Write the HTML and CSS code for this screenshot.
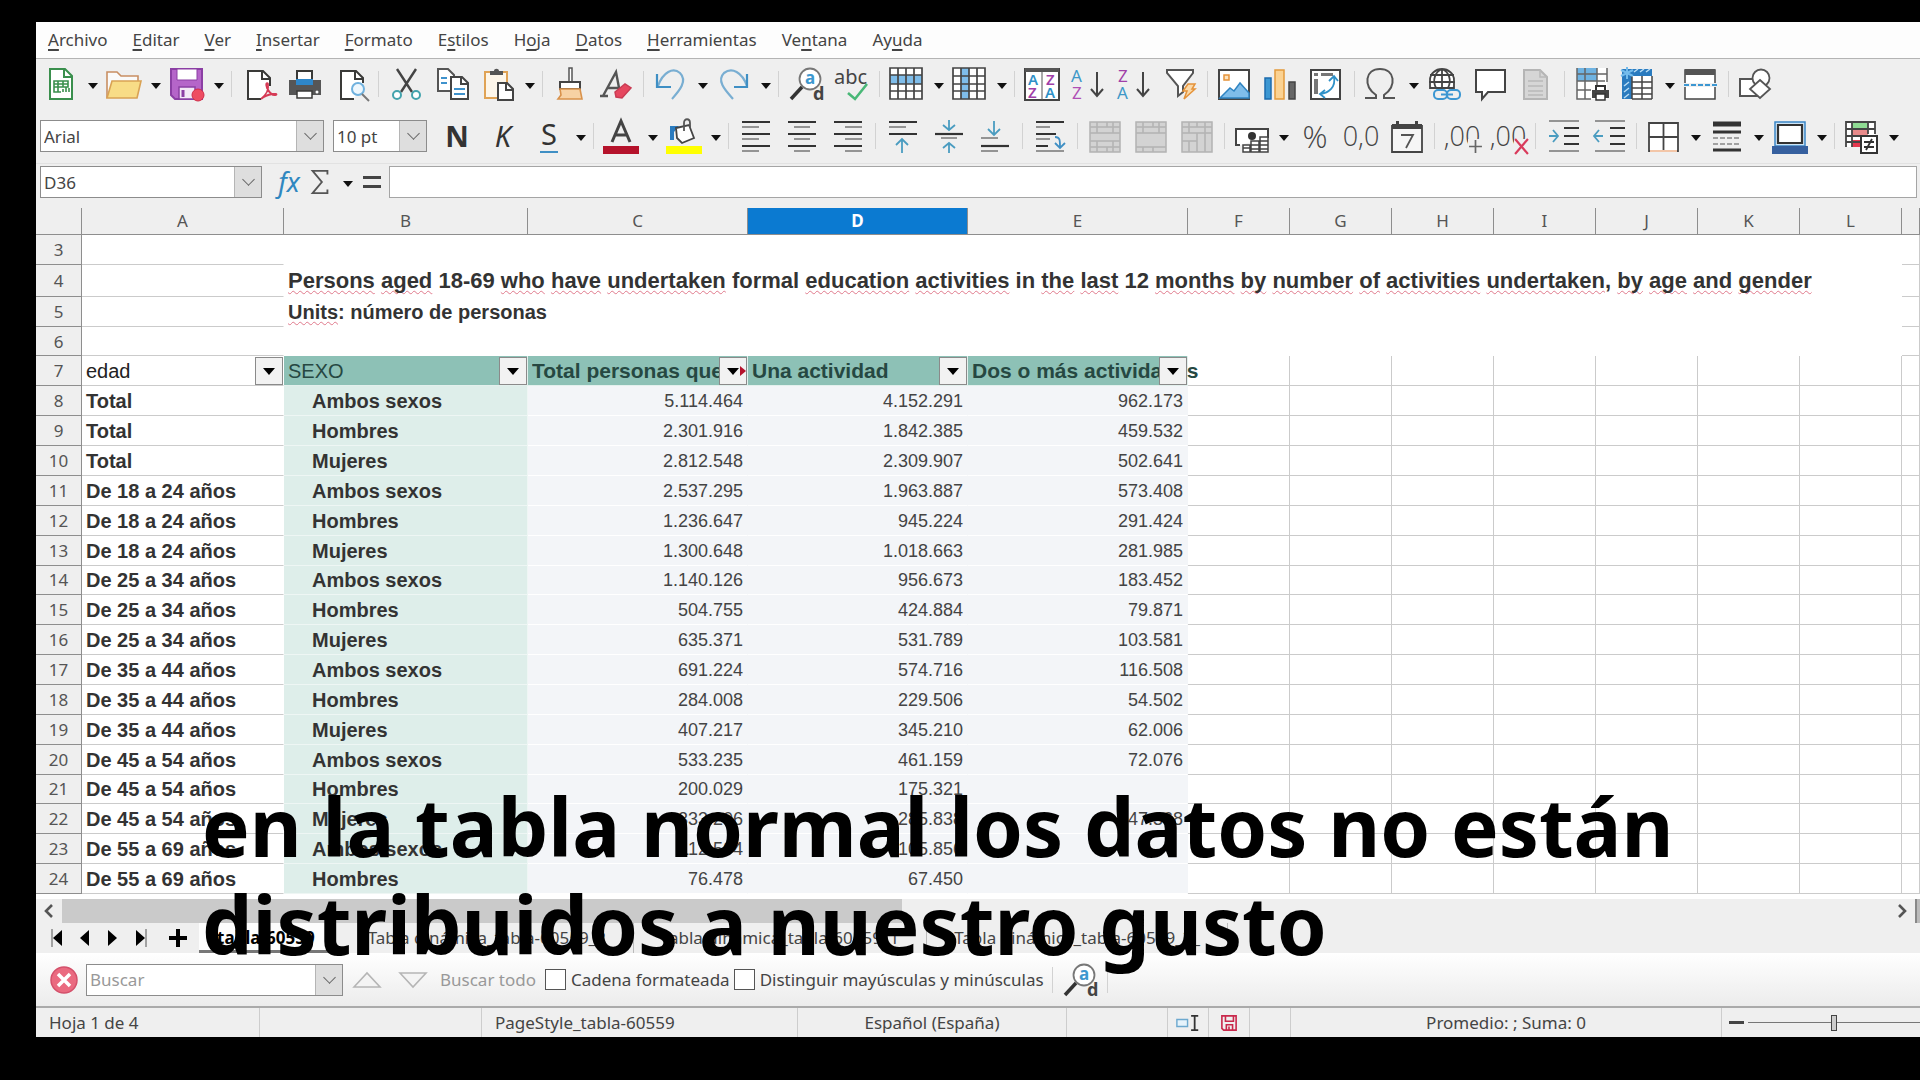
FILE: index.html
```
<!DOCTYPE html>
<html lang="es">

<head>
    <meta charset="utf-8">
    <meta name="viewport" content="width=device-width,initial-scale=1">
    <title>tabla-60559 - Calc</title>
    <link rel="stylesheet" href="styles.css">
</head>

<body>
    <div class="window">
        <nav class="menu">
            <a href="#"><u>A</u>rchivo</a>
            <a href="#"><u>E</u>ditar</a>
            <a href="#"><u>V</u>er</a>
            <a href="#"><u>I</u>nsertar</a>
            <a href="#"><u>F</u>ormato</a>
            <a href="#">E<u>s</u>tilos</a>
            <a href="#">H<u>o</u>ja</a>
            <a href="#"><u>D</u>atos</a>
            <a href="#"><u>H</u>erramientas</a>
            <a href="#">Ve<u>n</u>tana</a>
            <a href="#">Ay<u>u</u>da</a>
        </nav>

        <!-- standard toolbar -->
        <div class="toolbar">
            <button class="tool" aria-label="Nuevo"><svg viewBox="0 0 36 36"><path d="M7 3h15l7 7v23H7z" fill="#fff" stroke="#3a8f4d" stroke-width="2"/><path d="M21 3v8h8" fill="none" stroke="#3a8f4d" stroke-width="2"/><path d="M11 15h14v6H11zM11 18h14M15 15v11M20 15v6M11 21v5h7M20 26v-3M23 26v-5M26 26v-4" fill="none" stroke="#3a8f4d" stroke-width="1.6"/></svg></button>
            <button class="drop" aria-label="Más"></button>
            <button class="tool" aria-label="Abrir"><svg viewBox="0 0 36 36"><path d="M1 32V6h10l4 4h17v6" fill="#fafafa" stroke="#c98f63" stroke-width="1.6"/><path d="M6 15h29l-4 17H1z" fill="#f8dc86" stroke="#d9a254" stroke-width="1.6"/></svg></button>
            <button class="drop" aria-label="Más"></button>
            <button class="tool" aria-label="Guardar"><svg viewBox="0 0 36 36"><path d="M2 3h31v30H6l-4-4z" fill="#b565c9" stroke="#8b3fa4" stroke-width="2"/><path d="M8 3h20v11H8z" fill="#fff" stroke="#8b3fa4"/><path d="M10 21h16v12H10z" fill="#f3e8f6" stroke="#8b3fa4" stroke-width="1.5"/><path d="M14 24v7" stroke="#8b3fa4" stroke-width="3"/><circle cx="29" cy="29" r="6" fill="#ee4c62" stroke="#d02d48"/></svg></button>
            <button class="drop" aria-label="Más"></button>
            <span class="sep"></span>
            <button class="tool" aria-label="Exportar a PDF"><svg viewBox="0 0 36 36"><path d="M20 33H7V5h15l7 7v8" fill="#fff" stroke="#3a3a38" stroke-width="2"/><path d="M21 5v8h8" fill="none" stroke="#3a3a38" stroke-width="2"/><path d="M20 33c5-4 8-10 7-15-1-2-3 0-1 4s5 8 9 7c3-2-8-2-15 4z" fill="none" stroke="#d63a55" stroke-width="1.8"/></svg></button>
            <button class="tool" aria-label="Imprimir"><svg viewBox="0 0 36 36"><path d="M10 14V5h15v9" fill="#fff" stroke="#3a3a38" stroke-width="2"/><path d="M2 14h32v15H2z" fill="#565656"/><path d="M9 13h17v6H9z" fill="#2f87c9"/><path d="M10 25h15v7H10z" fill="#fff" stroke="#3a3a38" stroke-width="1.5"/><circle cx="30" cy="26" r="1.5" fill="#fff"/></svg></button>
            <button class="tool" aria-label="Previsualizar"><svg viewBox="0 0 36 36"><path d="M30 17v-5l-7-7H8v28h13" fill="#fff" stroke="#3a3a38" stroke-width="2"/><path d="M22 5v8h8" fill="none" stroke="#3a3a38" stroke-width="2"/><circle cx="25" cy="23" r="6" fill="#eef7fd" stroke="#6fb1de" stroke-width="2"/><path d="M29 28l7 7" stroke="#777" stroke-width="2"/></svg></button>
            <span class="sep"></span>
            <button class="tool" aria-label="Cortar"><svg viewBox="0 0 36 36"><path d="M9 3l15 23M28 3L13 26" stroke="#444" stroke-width="2.4"/><circle cx="9" cy="29" r="4" fill="#fff" stroke="#43a3ad" stroke-width="2"/><circle cx="28" cy="29" r="4" fill="#fff" stroke="#43a3ad" stroke-width="2"/></svg></button>
            <button class="tool" aria-label="Copiar"><svg viewBox="0 0 36 36"><path d="M4 3h10l6 6v16H4z" fill="#fff" stroke="#555" stroke-width="2"/><path d="M7 12h6M7 17h6" stroke="#3f92cc" stroke-width="2"/><path d="M17 11h11l6 6v16H17z" fill="#fff" stroke="#444" stroke-width="2"/><path d="M27 11v7h7" fill="none" stroke="#444" stroke-width="2"/><path d="M20 23h11M20 28h11" stroke="#3f92cc" stroke-width="2"/></svg></button>
            <button class="tool" aria-label="Pegar"><svg viewBox="0 0 36 36"><path d="M5 6h22v26H5z" fill="#fdf6ea" stroke="#e0a355" stroke-width="2"/><path d="M10 9V5h4c0-3 5-3 5 0h4v4z" fill="#555"/><path d="M18 17h9l6 6v11H18z" fill="#fff" stroke="#444" stroke-width="2"/><path d="M26 17v7h7" fill="none" stroke="#444" stroke-width="2"/></svg></button>
            <button class="drop" aria-label="Más"></button>
            <span class="sep"></span>
            <button class="tool" aria-label="Clonar formato"><svg viewBox="0 0 36 36"><path d="M17 2h3v14h-3z" fill="#fff" stroke="#555" stroke-width="1.5"/><path d="M8 16h20v7H8z" fill="#fff" stroke="#444" stroke-width="2"/><path d="M8 23h20l2 10H6l3-4z" fill="#f7d2a4" stroke="#d9924b" stroke-width="1.6"/></svg></button>
            <button class="tool" aria-label="Limpiar formato"><svg viewBox="0 0 36 36"><path d="M5 30L18 6l4 21M9 22h12M2 30h8" fill="none" stroke="#555" stroke-width="2.4"/><path d="M17 26l10-8 6 4-9 10-6-1z" fill="#e6475f" stroke="#c93b53" stroke-width="1.5"/></svg></button>
            <span class="sep"></span>
            <button class="tool" aria-label="Deshacer"><svg viewBox="0 0 36 36"><path d="M5 20C10 6 20 1 27 7c8 8-1 18-8 26" fill="none" stroke="#79aed2" stroke-width="2.2"/><path d="M4 8v13h14" fill="none" stroke="#3f8fc4" stroke-width="2.2"/></svg></button>
            <button class="drop" aria-label="Más"></button>
            <button class="tool" aria-label="Rehacer"><svg viewBox="0 0 36 36"><path d="M31 20C26 6 16 1 8 7c-8 8 2 18 9 26" fill="none" stroke="#79aed2" stroke-width="2.2"/><path d="M31 8v13H18" fill="none" stroke="#3f8fc4" stroke-width="2.2"/></svg></button>
            <button class="drop" aria-label="Más"></button>
            <span class="sep"></span>
            <button class="tool" aria-label="Buscar y reemplazar"><svg viewBox="0 0 36 36"><circle cx="22" cy="13" r="10.500" fill="#fff" stroke="#777" stroke-width="1.800"/><path d="M3 33l11-12" stroke="#333" stroke-width="3.500"/><text x="17" y="18" font-size="17" font-weight="bold" fill="#3d98cf">a</text><text x="25" y="34" font-size="18" font-weight="bold" fill="#444">d</text></svg></button>
            <button class="tool" aria-label="Ortografía"><svg viewBox="0 0 36 36"><text x="0" y="18" font-size="20" fill="#444">abc</text><path d="M14 27l7 6L33 18" fill="none" stroke="#49b877" stroke-width="2.6"/></svg></button>
            <span class="sep"></span>
            <button class="tool" aria-label="Fila"><svg viewBox="0 0 36 36"><path d="M1 2h32v31H1z" fill="#fff"/><path d="M1 9h32v9H1z" fill="#7fbdea"/><path d="M1 2h32v31H1zM1 9h32M1 18h32M1 25h32M9 2v31M17 2v31M25 2v31" fill="none" stroke="#444" stroke-width="1.7"/></svg></button>
            <button class="drop" aria-label="Más"></button>
            <button class="tool" aria-label="Columna"><svg viewBox="0 0 36 36"><path d="M1 2h32v31H1z" fill="#fff"/><path d="M9 2h8v31H9z" fill="#7fbdea"/><path d="M1 2h32v31H1zM1 10h32M1 18h32M1 25h32M9 2v31M17 2v31M25 2v31" fill="none" stroke="#444" stroke-width="1.7"/></svg></button>
            <button class="drop" aria-label="Más"></button>
            <span class="sep"></span>
            <button class="tool" aria-label="Ordenar"><svg viewBox="0 0 36 36"><path d="M1 3h34v31H1z" fill="#fff" stroke="#444" stroke-width="2"/><path d="M1 2h34v4H1zM17.500 5h1v29h-1z" fill="#555"/><g font-size="15" font-weight="600"><text x="4" y="19" fill="#2f91c8">A</text><text x="4" y="32" fill="#a03fa8">Z</text><text x="22" y="19" fill="#a03fa8">Z</text><text x="21" y="32" fill="#2f91c8">A</text></g></svg></button>
            <button class="tool" aria-label="Orden ascendente"><svg viewBox="0 0 36 36"><g font-size="17"><text x="1" y="16" fill="#3e98c8">A</text><text x="2" y="33" fill="#b04fb5">Z</text></g><path d="M27 6v24M21 23l6 7 6-7" fill="none" stroke="#444" stroke-width="2"/></svg></button>
            <button class="tool" aria-label="Orden descendente"><svg viewBox="0 0 36 36"><g font-size="17"><text x="2" y="16" fill="#a03fa8">Z</text><text x="1" y="33" fill="#3e98c8">A</text></g><path d="M27 6v24M21 23l6 7 6-7" fill="none" stroke="#444" stroke-width="2"/></svg></button>
            <button class="tool" aria-label="Filtro automático"><svg viewBox="0 0 36 36"><path d="M5 4h26v3L21 20v6l-5 4V20L5 7z" fill="#fff" stroke="#555" stroke-width="2"/><path d="M26 18h7l-3 5h3L22 33l3-8h-4z" fill="#fbd9a8" stroke="#e5933a" stroke-width="1.5"/></svg></button>
            <span class="sep"></span>
            <button class="tool" aria-label="Imagen"><svg viewBox="0 0 36 36"><path d="M2 4h30v29H2z" fill="#fff" stroke="#444" stroke-width="2"/><path d="M7 9h5v5H7z" fill="#fde3bd" stroke="#e5933a" stroke-width="1.500"/><path d="M3 32l10-10 4 3 6-8 9 10v5z" fill="#7fbdea" stroke="#2f84c2" stroke-width="1.5"/></svg></button>
            <button class="tool" aria-label="Gráfico"><svg viewBox="0 0 36 36"><path d="M2 12h6v21H2z" fill="#3c97d2" stroke="#1c6cae" stroke-width="1.500"/><path d="M12 4h9v29h-9z" fill="#fbd292" stroke="#e39b3c" stroke-width="1.500"/><path d="M26 16h6v17h-6z" fill="#666" stroke="#444" stroke-width="1.5"/></svg></button>
            <button class="tool" aria-label="Tabla dinámica"><svg viewBox="0 0 36 36"><path d="M2 4h29v29H2z" fill="#fff" stroke="#444" stroke-width="2"/><path d="M5 7h4v3H5zM12 7h12v3H12zM5 13h4v15H5z" fill="#777"/><path d="M25 11c2 10-5 16-14 17M20 15l5-5 4 5M16 24l-5 4 5 4" fill="none" stroke="#2f91c8" stroke-width="1.800"/></svg></button>
            <span class="sep"></span>
            <button class="tool" aria-label="Carácter especial"><svg viewBox="0 0 36 36"><path d="M1 32h11v-3C-1 20 1 3 16 3s17 17 4 26v3h11" fill="none" stroke="#555" stroke-width="2"/></svg></button>
            <button class="drop" aria-label="Más"></button>
            <button class="tool" aria-label="Hiperenlace"><svg viewBox="0 0 36 36"><circle cx="15" cy="14" r="12" fill="#fff"/><path d="M3 14a12 11 0 0 1 24 0v8H3zM3 9h24M2 16h26M15 3v20M9 22C5 14 8 6 15 3c7 3 10 11 6 19" fill="none" stroke="#444" stroke-width="1.800"/><rect x="7" y="24" width="13" height="9" rx="4" fill="#efefef" stroke="#3c97d2" stroke-width="2"/><rect x="20" y="24" width="13" height="9" rx="4" fill="#efefef" stroke="#3c97d2" stroke-width="2"/><path d="M14 28.500h12" stroke="#3c97d2" stroke-width="2"/></svg></button>
            <button class="tool" aria-label="Comentario"><svg viewBox="0 0 36 36"><path d="M3 4h29v22H15l-6 7v-7H3z" fill="#fff" stroke="#444" stroke-width="2"/></svg></button>
            <button class="tool" aria-label="Encabezado" disabled><svg viewBox="0 0 36 36"><path d="M5 4h16l7 7v22H5z" fill="#d6d6d6" stroke="#b5b5b5" stroke-width="2"/><path d="M21 4v7h7M9 15h15M9 20h15M9 25h15M9 29h15" fill="none" stroke="#b9b9b9" stroke-width="1.5"/></svg></button>
            <span class="sep"></span>
            <button class="tool" aria-label="Área de impresión"><svg viewBox="0 0 36 36"><path d="M3 2h30v31H3z" fill="#fff"/><path d="M3 2h20v13H3z" fill="#6fb3e2"/><path d="M3 2v31h14M3 15h28M3 8h30M3 24h14M11 2v31M23 2v17M33 2v14" fill="none" stroke="#666" stroke-width="1.500"/><path d="M22 27v-7h9v7" fill="#fff" stroke="#333" stroke-width="2"/><path d="M18 24h17v8H18z" fill="#444"/><path d="M22 28h9v6h-9z" fill="#fff" stroke="#333" stroke-width="1.5"/></svg></button>
            <button class="tool" aria-label="Inmovilizar"><svg viewBox="0 0 36 36"><path d="M2 3h30v30H2z" fill="#fff"/><path d="M2 3h30v7H12v23H2z" fill="#2a7bbf"/><path d="M12 10v23M22 10v23M32 10v23M12 16h20M12 22h20M12 28h20M12 33h20" stroke="#444" stroke-width="1.500"/><path d="M14 6l4-3M20 6l4-3M26 6l4-3M4 20l5-4M4 26l5-4M4 32l5-4" stroke="#b8dcf4" stroke-width="1.5"/><path d="M7 1v12M1 4l12 6M13 4L1 10" stroke="#74bcec" stroke-width="2"/></svg></button>
            <button class="drop" aria-label="Más"></button>
            <button class="tool" aria-label="Dividir ventana"><svg viewBox="0 0 36 36"><path d="M2 4h30v29H2z" fill="#fff" stroke="#444" stroke-width="1.500"/><path d="M2 3h30v6H2z" fill="#555"/><path d="M1 19h33" stroke="#efefef" stroke-width="4"/><path d="M1 19h33" stroke="#3c97d2" stroke-width="2" stroke-dasharray="5 2"/></svg></button>
            <span class="sep"></span>
            <button class="tool" aria-label="Formas"><svg viewBox="0 0 36 36"><path d="M2 13h17v17H2z" fill="#fff" stroke="#555" stroke-width="2"/><circle cx="23" cy="12" r="8.500" fill="#fff" stroke="#555" stroke-width="1.800"/><path d="M22 14l10 9-10 9-10-9z" fill="#fff" stroke="#555" stroke-width="1.8"/></svg></button>
        </div>

        <!-- formatting toolbar -->
        <div class="toolbar format">
            <span class="combo font"><select aria-label="Tipo de letra"><option>Arial</option></select><i></i></span>
            <span class="combo size"><select aria-label="Tamaño"><option>10 pt</option></select><i></i></span>
            <button class="tool letter" aria-label="Negrita"><b>N</b></button>
            <button class="tool letter" aria-label="Cursiva"><em>K</em></button>
            <button class="tool letter" aria-label="Subrayado"><span class="under">S</span></button>
            <button class="drop" aria-label="Más"></button>
            <span class="sep"></span>
            <button class="tool" aria-label="Color de letra"><svg viewBox="0 0 36 36"><path d="M9 24L18 3l9 21M12 17h12" fill="none" stroke="#444" stroke-width="3"/><path d="M0 28h36v8H0z" fill="#b5122b"/></svg></button>
            <button class="drop" aria-label="Más"></button>
            <button class="tool" aria-label="Color de fondo"><svg viewBox="0 0 36 36"><path d="M4 8h9l-5 6v8H4z" fill="#2a7bbf"/><path d="M10 10l13-3 5 13-12 5-5-5z" fill="#fff" stroke="#444" stroke-width="1.800"/><path d="M18 13V5c0-5 6-5 6 0v5" fill="none" stroke="#555" stroke-width="1.800"/><path d="M0 28h36v8H0z" fill="#ff0"/></svg></button>
            <button class="drop" aria-label="Más"></button>
            <span class="sep"></span>
            <button class="tool" aria-label="Izquierda"><svg viewBox="0 0 36 36"><path d="M4 4h28M4 16h28M4 28h28" stroke="#333" stroke-width="2.200"/><path d="M4 9h17M4 21h17M4 33h17" stroke="#777" stroke-width="1.5"/></svg></button>
            <button class="tool" aria-label="Centrar"><svg viewBox="0 0 36 36"><path d="M4 4h28M4 16h28M4 28h28" stroke="#333" stroke-width="2.200"/><path d="M10 9h16M10 21h16M10 33h16" stroke="#777" stroke-width="1.5"/></svg></button>
            <button class="tool" aria-label="Derecha"><svg viewBox="0 0 36 36"><path d="M4 4h28M4 16h28M4 28h28" stroke="#333" stroke-width="2.200"/><path d="M15 9h17M15 21h17M15 33h17" stroke="#777" stroke-width="1.5"/></svg></button>
            <span class="sep"></span>
            <button class="tool" aria-label="Arriba"><svg viewBox="0 0 36 36"><path d="M4 4h28M4 16h28" stroke="#333" stroke-width="2.200"/><path d="M4 9h17" stroke="#777" stroke-width="1.500"/><path d="M17 35V21M11 27l6-6 6 6" fill="none" stroke="#4a9cc0" stroke-width="1.8"/></svg></button>
            <button class="tool" aria-label="Centro vertical"><svg viewBox="0 0 36 36"><path d="M4 16h28" stroke="#333" stroke-width="2.200"/><path d="M10 20h16" stroke="#777" stroke-width="1.500"/><path d="M18 2v9M12 7l6 5 6-5M18 35V25M12 30l6-5 6 5" fill="none" stroke="#4a9cc0" stroke-width="1.8"/></svg></button>
            <button class="tool" aria-label="Abajo"><svg viewBox="0 0 36 36"><path d="M4 28h28" stroke="#333" stroke-width="2.200"/><path d="M4 20h17M4 33h17" stroke="#777" stroke-width="1.500"/><path d="M17 3v13M11 11l6 6 6-6" fill="none" stroke="#4a9cc0" stroke-width="1.8"/></svg></button>
            <span class="sep"></span>
            <button class="tool" aria-label="Ajustar texto"><svg viewBox="0 0 36 36"><path d="M4 4h28M4 16h20M4 28h12" stroke="#333" stroke-width="2.200"/><path d="M4 9h14M4 21h14M4 33h28" stroke="#777" stroke-width="1.500"/><path d="M23 19c5 0 5 3 5 10M23 25l5 5 5-5" fill="none" stroke="#3f8fc4" stroke-width="1.8"/></svg></button>
            <span class="sep"></span>
            <button class="tool" aria-label="Combinar y centrar" disabled><svg viewBox="0 0 36 36"><path d="M3 4h30v30H3zM3 9h30M3 15h30M3 23h30M3 29h30M10 4v11M20 4v5M26 4v11M10 23v11M20 29v5M26 23v11" fill="#d3d3d3" stroke="#b3b3b3" stroke-width="1.5"/></svg></button>
            <button class="tool" aria-label="Combinar" disabled><svg viewBox="0 0 36 36"><path d="M3 4h30v30H3zM3 9h30M3 15h30M3 29h30M10 4v11M20 4v5M26 4v11M10 29v5M20 29v5" fill="#d3d3d3" stroke="#b3b3b3" stroke-width="1.5"/></svg></button>
            <button class="tool" aria-label="Dividir" disabled><svg viewBox="0 0 36 36"><path d="M3 4h30v30H3zM3 9h30M3 15h30M3 23h15M10 4v11M10 23v11M18 15v19M26 4v30M18 4v5" fill="#d3d3d3" stroke="#b3b3b3" stroke-width="1.5"/></svg></button>
            <span class="sep"></span>
            <button class="tool" aria-label="Moneda"><svg viewBox="0 0 36 36"><path d="M6 27H2V11h32v9" fill="#fff" stroke="#444" stroke-width="2"/><circle cx="18" cy="18" r="4" fill="#333"/><path d="M9 27h7v7H9zM17 23h8v11h-8zM26 19h8v15h-8zM9 30h7M17 27h8M17 31h8M26 23h8M26 27h8M26 31h8" fill="#fff" stroke="#444" stroke-width="1.5"/></svg></button>
            <button class="drop" aria-label="Más"></button>
            <button class="tool number percent" aria-label="Porcentaje">%</button>
            <button class="tool number" aria-label="Número">0,0</button>
            <button class="tool" aria-label="Fecha"><svg viewBox="0 0 36 36"><path d="M3 8h30v26H3z" fill="#f6f6f6" stroke="#444" stroke-width="1.800"/><path d="M3 6h30v5H3zM7 3h3v5H7zM26 3h3v5h-3z" fill="#444"/><path d="M12 17h12l-7 13" fill="none" stroke="#555" stroke-width="1.8"/></svg></button>
            <span class="sep"></span>
            <button class="tool number" aria-label="Añadir decimal">,00<svg class="mark" viewBox="0 0 14 14"><path d="M7 1v12M1 7h12" stroke="#666" stroke-width="1.6"/></svg></button>
            <button class="tool number" aria-label="Eliminar decimal">,00<svg class="mark" viewBox="0 0 14 14"><path d="M1 0l12 14M13 0L1 14" stroke="#d93a5b" stroke-width="2"/></svg></button>
            <span class="sep"></span>
            <button class="tool" aria-label="Aumentar sangría"><svg viewBox="0 0 36 36"><path d="M4 3h30M4 33h30" stroke="#777" stroke-width="1.500"/><path d="M19 10h15M19 18h15M19 26h15" stroke="#333" stroke-width="2.200"/><path d="M4 18h8M8 12l5 6-5 6" fill="none" stroke="#4a9cc0" stroke-width="1.8"/></svg></button>
            <button class="tool" aria-label="Disminuir sangría"><svg viewBox="0 0 36 36"><path d="M4 3h30M4 33h30" stroke="#777" stroke-width="1.500"/><path d="M19 10h15M19 18h15M19 26h15" stroke="#333" stroke-width="2.200"/><path d="M3 18h9M8 12l-5 6 5 6" fill="none" stroke="#4a9cc0" stroke-width="1.8"/></svg></button>
            <span class="sep"></span>
            <button class="tool" aria-label="Bordes"><svg viewBox="0 0 36 36"><path d="M3 5h29v28H3zM17.500 5v28M3 19h29" fill="#fff" stroke="#444" stroke-width="1.800"/><path d="M4 33h27" stroke="#f3c6a8" stroke-width="2"/></svg></button>
            <button class="drop" aria-label="Más"></button>
            <button class="tool" aria-label="Estilo de borde"><svg viewBox="0 0 36 36"><path d="M4 6h28" stroke="#333" stroke-width="5"/><path d="M4 14h28M4 32h28" stroke="#333" stroke-width="3"/><path d="M4 20h28M4 26h28" stroke="#888" stroke-width="1.500" stroke-dasharray="5 2"/></svg></button>
            <button class="drop" aria-label="Más"></button>
            <button class="tool" aria-label="Color de borde"><svg viewBox="0 0 36 36"><path d="M3 4h30v24H3z" fill="#cfe5f6" stroke="#3c87c6" stroke-width="1.500"/><path d="M6 7h24v18H6z" fill="#fff" stroke="#333" stroke-width="2.200"/><path d="M0 28h36v8H0z" fill="#36609f"/></svg></button>
            <button class="drop" aria-label="Más"></button>
            <span class="sep"></span>
            <button class="tool" aria-label="Formato condicional"><svg viewBox="0 0 36 36"><path d="M2 4h29v14h-9v11H2z" fill="#fff"/><path d="M8 4h16v7H8z" fill="#8fdc93"/><path d="M8 11h16v7H8z" fill="#e88b8b"/><path d="M8 22h8v7H8z" fill="#e3384e"/><path d="M2 29V4h29v12M2 11h29M2 18h14M2 24h14M8 4v25M24 4v12" fill="none" stroke="#444" stroke-width="1.800"/><path d="M17 18h16v17H17z" fill="#fff" stroke="#333" stroke-width="2"/><path d="M20 24h10M20 29h10M28 21l-6 11" stroke="#333" stroke-width="1.800"/></svg></button>
            <button class="drop" aria-label="Más"></button>
        </div>

        <!-- formula bar -->
        <div class="formula">
            <span class="combo name"><input type="text" value="D36" aria-label="Cuadro de nombre"><i></i></span>
            <button class="fx" aria-label="Asistente de funciones">fx</button>
            <button class="sum" aria-label="Suma"><svg viewBox="0 0 20 28"><path d="M18 6V2H2l10 12L2 26h16v-4" fill="none" stroke="#555" stroke-width="2"/></svg></button>
            <button class="drop" aria-label="Más"></button>
            <button class="equals" aria-label="Fórmula"></button>
            <input class="line" type="text" aria-label="Línea de entrada">
        </div>

        <div class="sheet">
            <table>
                <colgroup>
                    <col class="w-num"><col class="w-a"><col class="w-b"><col class="w-data"><col class="w-data"><col class="w-data">
                    <col class="w-std"><col class="w-std"><col class="w-std"><col class="w-std"><col class="w-std"><col class="w-std"><col class="w-std"><col>
                </colgroup>
                <thead>
                    <tr><th></th><th>A</th><th>B</th><th>C</th><th class="selected">D</th><th>E</th><th>F</th><th>G</th><th>H</th><th>I</th><th>J</th><th>K</th><th>L</th><th></th></tr>
                </thead>
                <tbody>
                    <tr><th>3</th><td></td><td colspan="11" class="merged"></td><td></td></tr>
                    <tr class="tall"><th>4</th><td></td><td colspan="11" class="merged title"><u>Persons</u> <u>aged</u> 18-69 <u>who</u> <u>have</u> <u>undertaken</u> formal <u>education</u> <u>activities</u> in <u>the</u> <u>last</u> 12 <u>months</u> <u>by</u> <u>number</u> <u>of</u> <u>activities</u> <u>undertaken</u>, <u>by</u> <u>age</u> <u>and</u> <u>gender</u></td><td></td></tr>
                    <tr><th>5</th><td></td><td colspan="11" class="merged"><u>Units</u>: número de personas</td><td></td></tr>
                    <tr><th>6</th><td></td><td colspan="11" class="merged"></td><td></td></tr>
                    <tr class="heads"><th>7</th><td>edad<button class="filter" aria-label="Filtrar edad"></button></td><td>SEXO<button class="filter" aria-label="Filtrar sexo"></button></td><td><div class="clip">Total personas que</div><button class="filter more" aria-label="Filtrar total"></button></td><td>Una actividad<button class="filter" aria-label="Filtrar una actividad"></button></td><td>Dos o más actividades<button class="filter" aria-label="Filtrar dos o más"></button></td><td></td><td></td><td></td><td></td><td></td><td></td><td></td><td></td></tr>
                    <tr><th>8</th><td>Total</td><td>Ambos sexos</td><td>5.114.464</td><td>4.152.291</td><td>962.173</td><td></td><td></td><td></td><td></td><td></td><td></td><td></td><td></td></tr>
                    <tr><th>9</th><td>Total</td><td>Hombres</td><td>2.301.916</td><td>1.842.385</td><td>459.532</td><td></td><td></td><td></td><td></td><td></td><td></td><td></td><td></td></tr>
                    <tr><th>10</th><td>Total</td><td>Mujeres</td><td>2.812.548</td><td>2.309.907</td><td>502.641</td><td></td><td></td><td></td><td></td><td></td><td></td><td></td><td></td></tr>
                    <tr><th>11</th><td>De 18 a 24 años</td><td>Ambos sexos</td><td>2.537.295</td><td>1.963.887</td><td>573.408</td><td></td><td></td><td></td><td></td><td></td><td></td><td></td><td></td></tr>
                    <tr><th>12</th><td>De 18 a 24 años</td><td>Hombres</td><td>1.236.647</td><td>945.224</td><td>291.424</td><td></td><td></td><td></td><td></td><td></td><td></td><td></td><td></td></tr>
                    <tr><th>13</th><td>De 18 a 24 años</td><td>Mujeres</td><td>1.300.648</td><td>1.018.663</td><td>281.985</td><td></td><td></td><td></td><td></td><td></td><td></td><td></td><td></td></tr>
                    <tr><th>14</th><td>De 25 a 34 años</td><td>Ambos sexos</td><td>1.140.126</td><td>956.673</td><td>183.452</td><td></td><td></td><td></td><td></td><td></td><td></td><td></td><td></td></tr>
                    <tr><th>15</th><td>De 25 a 34 años</td><td>Hombres</td><td>504.755</td><td>424.884</td><td>79.871</td><td></td><td></td><td></td><td></td><td></td><td></td><td></td><td></td></tr>
                    <tr><th>16</th><td>De 25 a 34 años</td><td>Mujeres</td><td>635.371</td><td>531.789</td><td>103.581</td><td></td><td></td><td></td><td></td><td></td><td></td><td></td><td></td></tr>
                    <tr><th>17</th><td>De 35 a 44 años</td><td>Ambos sexos</td><td>691.224</td><td>574.716</td><td>116.508</td><td></td><td></td><td></td><td></td><td></td><td></td><td></td><td></td></tr>
                    <tr><th>18</th><td>De 35 a 44 años</td><td>Hombres</td><td>284.008</td><td>229.506</td><td>54.502</td><td></td><td></td><td></td><td></td><td></td><td></td><td></td><td></td></tr>
                    <tr><th>19</th><td>De 35 a 44 años</td><td>Mujeres</td><td>407.217</td><td>345.210</td><td>62.006</td><td></td><td></td><td></td><td></td><td></td><td></td><td></td><td></td></tr>
                    <tr><th>20</th><td>De 45 a 54 años</td><td>Ambos sexos</td><td>533.235</td><td>461.159</td><td>72.076</td><td></td><td></td><td></td><td></td><td></td><td></td><td></td><td></td></tr>
                    <tr><th>21</th><td>De 45 a 54 años</td><td>Hombres</td><td>200.029</td><td>175.321</td><td></td><td></td><td></td><td></td><td></td><td></td><td></td><td></td><td></td></tr>
                    <tr><th>22</th><td>De 45 a 54 años</td><td>Mujeres</td><td>333.206</td><td>285.838</td><td>47.368</td><td></td><td></td><td></td><td></td><td></td><td></td><td></td><td></td></tr>
                    <tr><th>23</th><td>De 55 a 69 años</td><td>Ambos sexos</td><td>112.504</td><td>105.856</td><td></td><td></td><td></td><td></td><td></td><td></td><td></td><td></td><td></td></tr>
                    <tr><th>24</th><td>De 55 a 69 años</td><td>Hombres</td><td>76.478</td><td>67.450</td><td></td><td></td><td></td><td></td><td></td><td></td><td></td><td></td><td></td></tr>
                </tbody>
            </table>
        </div>

        <div class="hscroll">
            <button aria-label="Desplazar a la izquierda"><svg viewBox="0 0 10 16"><path d="M8 2L2 8l6 6" fill="none" stroke="#555" stroke-width="2.6"/></svg></button>
            <div class="track"><div class="thumb"></div></div>
            <button aria-label="Desplazar a la derecha"><svg viewBox="0 0 10 16"><path d="M2 2l6 6-6 6" fill="none" stroke="#555" stroke-width="2.6"/></svg></button>
            <span class="grip"></span>
        </div>

        <div class="tabs">
            <button class="nav" aria-label="Primera hoja"><svg viewBox="0 0 12 18"><path d="M1 0v18" stroke="#555"/><path d="M11 1v16L2 9z"/></svg></button>
            <button class="nav" aria-label="Hoja anterior"><svg viewBox="0 0 12 18"><path d="M10 1v16L1 9z"/></svg></button>
            <button class="nav" aria-label="Hoja siguiente"><svg viewBox="0 0 12 18"><path d="M1 1v16l9-8z"/></svg></button>
            <button class="nav" aria-label="Última hoja"><svg viewBox="0 0 12 18"><path d="M11 0v18" stroke="#555"/><path d="M1 1v16l9-8z"/></svg></button>
            <button class="nav add" aria-label="Añadir hoja"><svg viewBox="0 0 20 20"><path d="M10 1v18M1 10h18" stroke="#000" stroke-width="4"/></svg></button>
            <a href="#" class="tab active">tabla-60559</a>
            <a href="#" class="tab">Tabla dinámica_tabla-60559_2</a>
            <a href="#" class="tab">Tabla dinámica_tabla-60559_1</a>
            <a href="#" class="tab">Tabla dinámica_tabla-60559_2_</a>
        </div>

        <div class="findbar">
            <button class="close" aria-label="Cerrar"><svg viewBox="0 0 28 28"><circle cx="14" cy="14" r="13" fill="#ea6a80" stroke="#d4516b" stroke-width="1.500"/><path d="M8 8l12 12M20 8L8 20" stroke="#fff" stroke-width="3.5"/></svg></button>
            <span class="combo search"><input type="text" placeholder="Buscar" aria-label="Buscar"><i></i></span>
            <button class="step" aria-label="Anterior"><svg viewBox="0 0 30 16"><path d="M2 15L15 1l13 14z" fill="#f4f4f4" stroke="#b5b5b5" stroke-width="1.6"/></svg></button>
            <button class="step" aria-label="Siguiente"><svg viewBox="0 0 30 16"><path d="M2 1l13 14L28 1z" fill="#f4f4f4" stroke="#b5b5b5" stroke-width="1.6"/></svg></button>
            <button class="all" disabled>Buscar todo</button>
            <label><input type="checkbox">Cadena formateada</label>
            <label><input type="checkbox">Distinguir mayúsculas y minúsculas</label>
            <span class="sep"></span>
            <button class="tool" aria-label="Buscar y reemplazar"><svg viewBox="0 0 36 36"><circle cx="22" cy="13" r="10.500" fill="#fff" stroke="#777" stroke-width="1.800"/><path d="M3 33l11-12" stroke="#333" stroke-width="3.500"/><text x="17" y="18" font-size="17" font-weight="bold" fill="#3d98cf">a</text><text x="25" y="34" font-size="18" font-weight="bold" fill="#444">d</text></svg></button>
            <span class="sep"></span>
        </div>

        <footer class="status">
            <span class="page">Hoja 1 de 4</span>
            <span class="blank"></span>
            <span class="style">PageStyle_tabla-60559</span>
            <span class="lang">Español (España)</span>
            <span class="insert"></span>
            <span class="icon"><svg viewBox="0 0 26 18"><path d="M1 5h12v8H1z" fill="#e6f3fb" stroke="#6da9cf" stroke-width="1.600"/><path d="M17 1h8M21 1v16M17 17h8" stroke="#333" stroke-width="2"/></svg></span>
            <span class="icon"><svg viewBox="0 0 18 18"><path d="M1 1h16v16H3l-2-2zM5 1v6h9V1M6 17v-6h7v6M9 13v4" fill="none" stroke="#c9284b" stroke-width="1.8"/></svg></span>
            <span class="icon"></span>
            <span class="result">Promedio: ; Suma: 0</span>
            <div class="zoom"><button class="minus" aria-label="Reducir"></button><input type="range" min="0" max="100" value="50" aria-label="Escala"></div>
        </footer>
    </div>

    <p class="caption">en la tabla normal los datos no están<br>distribuidos a nuestro gusto</p>
</body>

</html>
```
FILE: styles.css
```
* {
    box-sizing: border-box;
}

body {
    margin: 0;
    padding: 22px 0 43px 36px;
    height: 100vh;
    background: #000;
    color: #444;
    font-family: "Noto Sans", "Open Sans", sans-serif;
    font-size: 17px;
    overflow: hidden;
}

button,
input,
select {
    margin: 0;
    padding: 0;
    border: 0;
    border-radius: 0;
    background: none;
    color: inherit;
    font: inherit;
}

svg {
    display: block;
    overflow: visible;
}

.window {
    display: flex;
    flex-direction: column;
    height: 100%;
    background: #efefef;
    overflow: hidden;
}

/* menu */
.menu {
    display: flex;
    gap: 25px;
    height: 37px;
    padding: 0 12px;
    line-height: 36px;
    background: #fdfdfd;
    border-bottom: 1px solid #b4b4b4;
}

.menu a {
    color: inherit;
    text-decoration: none;
}

.menu u {
    text-decoration-thickness: 2px;
    text-underline-offset: 3px;
}

/* toolbars */
.toolbar {
    display: flex;
    align-items: center;
    height: 50px;
    padding-left: 2px;
}

.toolbar > * {
    flex: none;
}

.format {
    height: 54px;
    padding-left: 4px;
}

.tool {
    position: relative;
    width: 46px;
    height: 36px;
    padding: 0 5px;
    flex: none;
}

.tool svg {
    width: 36px;
    height: 36px;
}

.drop {
    width: 17px;
    height: 36px;
    display: flex;
    align-items: center;
    justify-content: center;
    padding-top: 4px;
}

.drop::after {
    content: "";
    border: 5px solid transparent;
    border-top: 6px solid #111;
    border-bottom: 0;
}

.sep {
    width: 9px;
    height: 26px;
    background: linear-gradient(#d2d2d2, #d2d2d2) center / 1px 100% no-repeat;
}

.letter {
    font-size: 29px;
    line-height: 34px;
    color: #333;
}

.letter .under {
    display: block;
    width: 18px;
    height: 34px;
    margin: 0 auto;
    line-height: 30px;
    border-bottom: 2px solid #3f8fc4;
}

.number {
    padding: 0;
    font-family: "Open Sans", "Noto Sans", sans-serif;
    font-weight: 300;
    font-size: 27px;
    line-height: 36px;
    color: #444;
}

.percent {
    font-size: 31px;
}

.tool .mark {
    position: absolute;
    right: 2px;
    bottom: 0;
    width: 15px;
    height: 15px;
    background: #efefef;
}

.combo {
    display: flex;
    height: 32px;
    background: #fff;
    border: 1px solid #8c8c8c;
}

.combo select,
.combo input {
    flex: 1;
    min-width: 0;
    padding-left: 3px;
    appearance: none;
    background: #fff;
}

.combo i {
    display: flex;
    align-items: center;
    justify-content: center;
    width: 27px;
    background: #dedede;
    border-left: 1px solid #b5b5b5;
}

.combo i::after {
    content: "";
    width: 8px;
    height: 8px;
    margin-bottom: 5px;
    border: solid #666;
    border-width: 0 1px 1px 0;
    transform: rotate(45deg);
}

.font {
    width: 284px;
    margin-right: 9px;
}

.size {
    width: 94px;
    margin-right: 7px;
}

/* formula bar */
.formula {
    display: flex;
    align-items: center;
    height: 45px;
    padding: 2px 3px 10px 4px;
    border-top: 1px solid #e2e2e2;
}

.name {
    width: 222px;
    margin-right: 12px;
}

.fx {
    width: 30px;
    font-style: italic;
    font-size: 27px;
    line-height: 30px;
    color: #2f87c0;
}

.sum {
    width: 22px;
    margin-left: 6px;
}

.sum svg {
    width: 20px;
    height: 26px;
}

.formula .drop {
    margin: 0 7px;
}

.equals {
    width: 18px;
    height: 12px;
    margin-right: 8px;
    border: solid #444;
    border-width: 3px 0;
}

.line {
    flex: 1;
    height: 32px;
    background: #fff;
    border: 1px solid #a5a5a5;
}

/* sheet */
.sheet {
    flex: 1;
    min-height: 0;
    padding-bottom: 5px;
    background: #fff;
    overflow: hidden;
}

table {
    width: 100%;
    height: 100%;
    table-layout: fixed;
    border-collapse: separate;
    border-spacing: 0;
    background: #fff;
}

.w-num {
    width: 46px;
}

.w-a {
    width: 202px;
}

.w-b {
    width: 244px;
}

.w-data {
    width: 220px;
}

.w-std {
    width: 102px;
}

th,
td {
    padding: 1px 4px 0;
    height: 29px;
    line-height: 24px;
    white-space: nowrap;
}

th {
    background: #efefef;
    border: solid #8e8e8e;
    border-width: 0 1px 1px 0;
    font-weight: normal;
    color: #555;
}

thead th {
    height: 27px;
    padding-top: 0;
}

.selected {
    background: #0b7ad1;
    color: #fff;
    font-weight: bold;
}

td {
    position: relative;
    border: solid #cbcbcb;
    border-width: 0 1px 1px 0;
    font-family: "Liberation Sans", Arial, sans-serif;
    font-size: 20px;
    font-weight: bold;
    color: #333;
}

.tall td {
    height: 31px;
}

.merged {
    border-color: #fff;
}

td:nth-child(2) {
    border-right-color: #fff;
}

.title {
    font-size: 22px;
}

td u {
    text-decoration: underline wavy #e07a8c 1px;
    text-underline-offset: 2px;
    text-decoration-skip-ink: none;
}

tr:nth-child(n+6) td:nth-child(3) {
    padding-left: 28px;
    background: #deeeea;
    border-color: #eef6f4;
}

tr:nth-child(n+6) td:nth-child(n+4):nth-child(-n+6) {
    text-align: right;
    font-size: 18px;
    font-weight: normal;
    color: #444;
    background: #f3f5f8;
    border-color: #f3f5f8;
    border-bottom-color: #fff;
}

.heads td:nth-child(-n+3) {
    font-weight: normal;
    color: #222;
}

.heads td:nth-child(n+3):nth-child(-n+6) {
    background: #8dc1b6;
    border-color: #e3f0ed;
    color: #264842;
}

.heads td:nth-child(n+4) {
    font-size: 21px;
}

.heads td:nth-child(6) {
    border-right-color: #fff;
    z-index: 1;
}

.clip {
    margin-right: 20px;
    overflow: hidden;
}

.filter {
    position: absolute;
    right: 0;
    bottom: 0;
    display: flex;
    align-items: center;
    justify-content: center;
    width: 28px;
    height: 28px;
    background: #f2f2f2;
    border: 1px solid #8a8a8a;
}

.filter::after {
    content: "";
    border: 6px solid transparent;
    border-top: 7px solid #000;
    border-bottom: 0;
}

.more::before {
    content: "";
    position: absolute;
    right: 0;
    top: 8px;
    border: 5px solid transparent;
    border-left: 6px solid #b5122b;
    border-right: 0;
}

/* horizontal scroll bar */
.hscroll {
    display: flex;
    align-items: center;
    height: 24px;
}

.hscroll button {
    width: 26px;
    padding: 0 8px;
}

.hscroll svg {
    width: 10px;
    height: 16px;
}

.track {
    flex: 1;
    height: 100%;
}

.thumb {
    width: 46%;
    height: 100%;
    background: #cacaca;
}

.grip {
    width: 5px;
    height: 100%;
    background: #bbb;
    border-left: 2px solid #888;
}

/* sheet tabs */
.tabs {
    display: flex;
    align-items: center;
    height: 30px;
    padding-left: 15px;
}

.nav {
    width: 28px;
}

.nav svg {
    width: 12px;
    height: 18px;
}

.add {
    width: 36px;
    padding-left: 5px;
}

.add svg {
    width: 20px;
    height: 20px;
}

.tab {
    padding: 0 27px;
    height: 30px;
    line-height: 30px;
    color: #444;
    text-decoration: none;
    border-right: 1px solid #bbb;
}

.tab.active {
    padding: 0 18px;
    margin-right: 8px;
    background: #fdfdfd;
    border-right: 0;
    border-bottom: 3px solid #777;
    font-weight: bold;
    color: #000;
}

/* find bar */
.findbar {
    display: flex;
    align-items: center;
    height: 53px;
    padding-left: 14px;
    background: linear-gradient(#fff, #ececec);
}

.close {
    width: 28px;
    height: 28px;
    margin-right: 8px;
}

.search {
    width: 257px;
    margin-right: 9px;
}

.search input::placeholder {
    color: #999;
    opacity: 1;
}

.step {
    width: 30px;
    margin-right: 16px;
}

.all {
    margin: 0 9px 0 -4px;
    color: #999;
}

.findbar label {
    display: flex;
    align-items: center;
    margin-right: 4px;
}

.findbar input[type=checkbox] {
    width: 21px;
    height: 21px;
    margin-right: 5px;
    appearance: none;
    background: #fff;
    border: 1px solid #555;
}

/* status bar */
.status {
    display: flex;
    height: 31px;
    line-height: 30px;
    border-top: 2px solid #aaa;
}

.status > span {
    flex: none;
    border-right: 1px solid #cdcdcd;
}

.page {
    width: 224px;
    padding-left: 13px;
}

.blank {
    width: 222px;
}

.style {
    width: 316px;
    padding-left: 13px;
}

.lang {
    width: 269px;
    text-align: center;
}

.insert {
    width: 101px;
}

.icon {
    display: flex;
    align-items: center;
    justify-content: center;
    width: 41px;
}

.icon svg {
    height: 16px;
}

.status .result {
    flex: 1;
    text-align: center;
}

.zoom {
    display: flex;
    align-items: center;
    gap: 4px;
    width: 198px;
    padding-left: 7px;
}

.minus {
    width: 15px;
    height: 3px;
    background: #444;
}

.zoom input {
    flex: 1;
    min-width: 0;
    height: 18px;
    appearance: none;
    background: linear-gradient(#777, #777) center / 100% 1px no-repeat;
}

.zoom input::-webkit-slider-thumb {
    appearance: none;
    width: 6px;
    height: 16px;
    background: #ccc;
    border: 1px solid #444;
}

/* subtitle over the window */
.caption {
    position: absolute;
    left: 202px;
    bottom: 107px;
    margin: 0;
    color: #000;
    font-family: "Noto Sans", sans-serif;
    font-weight: bold;
    font-size: 80px;
    line-height: 98px;
}
```
